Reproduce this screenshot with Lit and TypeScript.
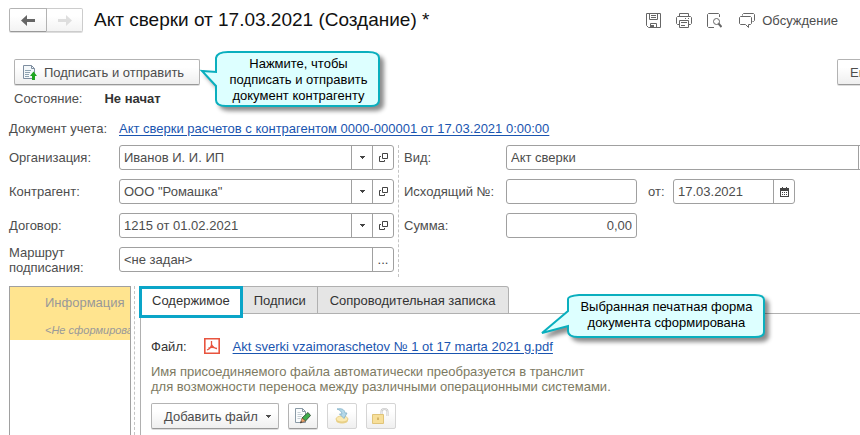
import { LitElement, html, svg, css } from "lit";
import { customElement, property } from "lit/decorators.js";

const shared = css`
  * { box-sizing: border-box; }
  button, input {
    font: inherit;
    color: inherit;
    margin: 0;
  }
  svg { display: block; flex: none; }
`;

const caret = svg`<path d="M0 0h5v1H4v1H3v1H2V2H1V1H0z" fill="currentColor"/>`;
const caretIcon = html`<svg width="5" height="3" viewBox="0 0 5 3" aria-hidden="true">${caret}</svg>`;

const openIcon = html`<svg width="9" height="9" viewBox="0 0 9 9" fill="none" stroke="#444" aria-hidden="true">
  <path d="M3.5.5h5v5h-5z"/><path d="M2 3.5H.5v5h5V7"/>
</svg>`;

const calendarIcon = html`<svg width="9" height="10" viewBox="0 0 9 10" aria-hidden="true">
  <path d="M0 1h9v9H0z" fill="#444"/><path d="M1 4h7v5H1z" fill="#fff"/>
  <path d="M2 0h1v2H2zM6 0h1v2H6z" fill="#444"/>
  <path d="M2 5h1v1H2zM4 5h1v1H4zM6 5h1v1H6zM2 7h1v1H2zM4 7h1v1H4zM6 7h1v1H6z" fill="#444"/>
</svg>`;

const saveIcon = html`<svg width="15" height="15" viewBox="0 0 15 15" fill="none" stroke="#666" aria-hidden="true">
  <path d="M.5.5h14v14h-12l-2-2z"/><path d="M3.500.5v6h8v-6M5 2.500h5M5 4.500h5M4.500 14.500v-4h6v4"/>
  <path d="M5 12h3v2H5z" fill="#666" stroke="none"/>
</svg>`;

const printIcon = html`<svg width="16" height="15" viewBox="0 0 16 15" fill="none" stroke="#666" aria-hidden="true">
  <path d="M3.500 3.500v-3h9v3M3.500 11.500h-2l-1-1v-6l1-1h13l1 1v6l-1 1h-2"/>
  <path d="M3.500 7.500h9v7h-9zM5 9.500h6M5 12.500h4M9 5.500h1M12 5.500h1"/>
</svg>`;

const previewIcon = html`<svg width="15" height="15" viewBox="0 0 15 15" fill="none" stroke="#666" aria-hidden="true">
  <path d="M12.500 4V1.500l-1-1h-10l-1 1v12l1 1H7"/><circle cx="9.500" cy="8.500" r="3"/>
  <path d="M11.500 10.500l3 3.500" stroke-width="2"/>
</svg>`;

const chatIcon = html`<svg width="16" height="15" viewBox="0 0 16 15" fill="none" stroke="#666" aria-hidden="true">
  <path d="M3.500 2.500v-1l1-1h10l1 1v6l-1 1h-1"/>
  <path d="M1.500 3.500h10l1 1v6l-1 1H9.500v3l-3-3h-5l-1-1v-6z"/>
</svg>`;

const signSendIcon = html`<svg width="14" height="15" viewBox="0 0 14 15" fill="none" aria-hidden="true">
  <path d="M.5.5h8l3 3v10H.5z" fill="#f4f8fa" stroke="#7e8ea0"/><path d="M8.500.5v3h3" stroke="#7e8ea0"/>
  <path d="M2 5.500h6M2 7.500h5M2 9.500h4M2 11.500h4" stroke="#8fa3b1"/>
  <path d="M10.500 6.500l3.500 4.500h-2v4H9v-4H7z" fill="#1fa51f"/>
</svg>`;

const pdfIcon = html`<svg width="16" height="16" viewBox="0 0 16 16" fill="none" stroke="#e8543f" aria-hidden="true">
  <path d="M.8.8h14.400v14.400H.8z" stroke-width="1.600"/>
  <path d="M7.500 3v3.500c0 2-2 4.500-4.500 5.500M7.500 6.500c.8 2 2.500 3.500 5.500 4M4.500 10.200c2.500-1.200 5-1.200 8 .5" stroke-width="1.300"/>
</svg>`;

const editIcon = html`<svg width="16" height="16" viewBox="0 0 16 16" fill="none" aria-hidden="true">
  <path d="M.5.5h7l3 3v11H.5z" fill="#fafcfd" stroke="#8a9aa6"/><path d="M7.500.5v3h3" stroke="#8a9aa6"/>
  <path d="M2.500 4.500h3M2.500 6.500h5M2.500 8.500h4M2.500 10.500h3" stroke="#c5ced4"/>
  <path d="M13 4.500l2.500 3-5 5.500-3.500-3z" fill="#3fae4c" stroke="#3c5c40"/>
  <path d="M7 10l3.500 3-5 2z" fill="#f0a468" stroke="#6a4a33" stroke-width=".6"/>
  <path d="M6 13l1.200 1.200-2.200 1z" fill="#333"/>
</svg>`;

const stampIcon = html`<svg width="14" height="16" viewBox="0 0 14 16" aria-hidden="true">
  <path d="M1 11v1.500c0 1.700 2.700 3 6 3s6-1.300 6-3V11z" fill="#ead38e"/>
  <ellipse cx="7" cy="11" rx="6" ry="3" fill="#fbeab2" stroke="#e3c878" stroke-width=".8"/>
  <path d="M2 1c4-.8 7.500 0 8 4h2L9 10.500 4.500 6H7C6.500 3.500 5 2 2 1z" fill="#b4d8e8" stroke="#7fb0c8" stroke-width=".8"/>
</svg>`;

const lockIcon = html`<svg width="17" height="16" viewBox="0 0 17 16" fill="none" aria-hidden="true">
  <path d="M9.500 7V3.500c0-1.500 1-2.500 3-2.500s3 1 3 2.500V8" stroke="#c4c4c4" stroke-width="2"/>
  <path d="M9.500 7V3.500c0-1.500 1-2.500 3-2.500s3 1 3 2.500V8" stroke="#f2f2f2" stroke-width=".8"/>
  <path d="M.5 6.500h11v9H.5z" fill="#f7df9a" stroke="#e0c479"/><path d="M6 9.500v2.500" stroke="#cba85a" stroke-width="1.500"/>
</svg>`;

const backIcon = html`<svg width="14" height="11" viewBox="0 0 14 11" aria-hidden="true">
  <path d="M6 0v4h8v3H6v4L0 5.500z" fill="#666"/>
</svg>`;
const forwardIcon = html`<svg width="14" height="11" viewBox="0 0 14 11" aria-hidden="true">
  <path d="M8 0v4H0v3h8v4l6-5.500z" fill="#dedede"/>
</svg>`;

@customElement("ref-field")
class RefField extends LitElement {
  @property() label = "";
  @property() value = "";
  @property() kind = "ref";

  static styles = [shared, css`
    :host { display: flex; align-items: center; height: 25px; }
    label { flex: none; width: var(--label-width, 110px); padding-right: 4px; line-height: 15px; }
    .box {
      flex: 1 1 0;
      min-width: 0;
      display: flex;
      height: 25px;
      border: 1px solid #a0a0a0;
      border-radius: 3px;
      background: #fff;
      overflow: hidden;
    }
    input { flex: 1 1 0; min-width: 0; border: 0; padding: 0 4px; background: none; outline: 0; }
    .number { text-align: right; }
    .box button {
      flex: none;
      width: 21px;
      padding: 0;
      border: 0;
      border-left: 1px solid #a0a0a0;
      background: none;
      display: flex;
      align-items: center;
      justify-content: center;
      color: #444;
    }
  `];

  render() {
    const k = this.kind;
    return html`
      <label for="f">${this.label}</label>
      <div class="box">
        <input id="f" class=${k === "number" ? "number" : ""} .value=${this.value}>
        ${k === "ref" ? html`<button aria-label="Выбрать">${caretIcon}</button><button aria-label="Открыть">${openIcon}</button>` : ""}
        ${k === "choice" ? html`<button aria-label="Выбрать">${caretIcon}</button>` : ""}
        ${k === "dots" ? html`<button aria-label="Выбрать маршрут">...</button>` : ""}
        ${k === "date" ? html`<button aria-label="Календарь">${calendarIcon}</button>` : ""}
      </div>
    `;
  }
}

@customElement("app-root")
class AppRoot extends LitElement {
  static styles = [shared, css`
    :host {
      display: flex;
      flex-direction: column;
      min-height: 100vh;
      overflow: hidden;
      background: #fff;
      color: #4d4d4d;
      font-family: "Liberation Sans", Arial, sans-serif;
      font-size: 13px;
      line-height: 15px;
    }
    .header { display: flex; align-items: center; height: 40px; padding: 0 22px 0 9px; }
    .nav { display: flex; height: 24px; }
    .nav button {
      width: 38px;
      padding: 0;
      border: 1px solid #b3b3b3;
      border-bottom-color: #999;
      border-radius: 2px 0 0 2px;
      box-shadow: 0 1px 0 #ddd;
      background: linear-gradient(#fff 30%, #f3f3f3);
      display: flex;
      align-items: center;
      justify-content: center;
    }
    .nav button:disabled { width: 36px; border-color: #ccc; border-left: 0; border-radius: 0 2px 2px 0; }
    h1 { flex: 1; margin: 0 0 0 11px; font-size: 19px; line-height: 24px; font-weight: 400; color: #111; white-space: nowrap; }
    .tools { display: flex; gap: 15px; align-items: center; }
    .tools button {
      display: flex;
      align-items: center;
      gap: 7px;
      border: 0;
      padding: 0;
      background: none;
      white-space: nowrap;
    }
    .tools button:last-child { margin-left: 2px; }
    .commands { display: flex; justify-content: space-between; margin-top: 19px; padding-left: 14px; }
    .anchor { position: relative; display: flex; }
    .btn {
      display: flex;
      align-items: center;
      justify-content: center;
      height: 26px;
      padding: 0 12px;
      border: 1px solid #b3b3b3;
      border-bottom-color: #999;
      border-radius: 2px;
      background: linear-gradient(#fff 30%, #efefef);
      box-shadow: 0 1px 0 #ddd;
      white-space: nowrap;
    }
    .btn:disabled { border-color: #d5d5d5; box-shadow: none; }
    .sign { padding: 0 15px 0 8px; gap: 7px; }
    .more { width: 63px; justify-content: flex-start; margin-right: -40px; }
    .state { display: flex; gap: 22px; padding: 6px 14px 0; }
    .state b { color: #333; }
    .doc { display: flex; padding: 15px 9px 0; white-space: nowrap; }
    .doc span { flex: none; width: 110px; }
    a { color: #1a55b0; text-decoration: underline; text-underline-offset: 2px; }
    .form { display: flex; margin-top: 9px; padding-left: 9px; }
    .left { flex: 0 1 390px; padding: 0 4px 5px 0; border-right: 1px dashed #c4c4c4; display: flex; flex-direction: column; gap: 9px; }
    .right { flex: 1; padding-left: 5px; margin-right: -20px; display: flex; flex-direction: column; gap: 9px; --label-width: 102px; }
    .pair { display: flex; gap: 11px; }
    .short { width: 233px; }
    .date { width: 147px; --label-width: 25px; }
    .body { flex: 1; display: flex; margin-top: 9px; padding-left: 9px; }
    .list { width: 122px; border: 1px solid #a0a0a0; border-bottom: 0; overflow: hidden; }
    .item { height: 53px; padding: 8px 0 0 35px; background: #ffe48f; color: #999; white-space: nowrap; }
    .item i { display: block; margin-top: 13px; font-size: 11px; }
    .split { width: 4px; border-right: 1px dashed #c4c4c4; margin-right: 4px; }
    .pane { flex: 1; min-width: 0; display: flex; flex-direction: column; }
    .tabs { display: flex; height: 28px; border-bottom: 1px solid #b0b0b0; }
    .tab {
      height: 28px;
      padding: 0 11px;
      border: 1px solid #b0b0b0;
      border-left-width: 0;
      background: #e5e5e5;
      color: #333;
      white-space: nowrap;
    }
    .tab:last-child { padding: 0 12px; border-radius: 0 3px 0 0; }
    .tab.active { height: 32px; padding: 0 10px 4px; border: 3px solid #0aa5c8; background: #fff; z-index: 1; }
    .content { flex: 1; border-left: 1px solid #b0b0b0; margin-left: 1px; padding: 23px 0 6px 10px; }
    .file { display: flex; align-items: center; height: 18px; color: #333; white-space: nowrap; }
    .pdf { margin: 0 13px 0 17px; }
    .hint { margin: 9px 0 0; color: #7d7a62; }
    .actions { display: flex; gap: 9px; margin-top: 9px; }
    .add { gap: 8px; padding: 0 7px 0 12px; }
    .icon { width: 30px; padding: 0; }
    .callout { position: absolute; z-index: 2; color: #000; font-size: 13px; line-height: 16px; text-align: center; white-space: nowrap; }
    .callout svg { position: absolute; left: 0; top: 0; overflow: visible; filter: drop-shadow(4px 4px 2px rgba(0, 0, 0, 0.45)); }
    .callout p { position: relative; margin: 0; }
    .c1 { left: 187px; top: -8px; width: 180px; padding: 5px 0 0 15px; }
    .c2 { right: -213px; top: -46px; width: 225px; padding: 6px 0 0 26px; }
  `];

  render() {
    return html`
      <header class="header">
        <div class="nav">
          <button aria-label="Назад">${backIcon}</button>
          <button aria-label="Вперед" disabled>${forwardIcon}</button>
        </div>
        <h1>Акт сверки от 17.03.2021 (Создание) *</h1>
        <div class="tools">
          <button aria-label="Сохранить">${saveIcon}</button>
          <button aria-label="Печать">${printIcon}</button>
          <button aria-label="Просмотр">${previewIcon}</button>
          <button>${chatIcon}Обсуждение</button>
        </div>
      </header>

      <div class="commands">
        <div class="anchor">
          <button class="btn sign">${signSendIcon}Подписать и отправить</button>
          <div class="callout c1" role="note">
            <svg width="180" height="58" viewBox="0 0 180 58" aria-hidden="true">
              <path d="M15 7Q16 1 27 1H167Q178 1 178 7V49Q178 55 170 55H25Q15 55 15 49V35L1 20L15 21Z" fill="#dff" stroke="#0aafbe" stroke-width="2"/>
            </svg>
            <p>Нажмите, чтобы<br>подписать и отправить<br>документ контрагенту</p>
          </div>
        </div>
        <button class="btn more">Еще</button>
      </div>
      <div class="state"><span>Состояние:</span><b>Не начат</b></div>
      <div class="doc">
        <span>Документ учета:</span>
        <a href="#">Акт сверки расчетов с контрагентом 0000-000001 от 17.03.2021 0:00:00</a>
      </div>

      <div class="form">
        <div class="left">
          <ref-field label="Организация:" value="Иванов И. И. ИП"></ref-field>
          <ref-field label="Контрагент:" value='ООО "Ромашка"'></ref-field>
          <ref-field label="Договор:" value="1215 от 01.02.2021"></ref-field>
          <ref-field label="Маршрут подписания:" value="<не задан>" kind="dots"></ref-field>
        </div>
        <div class="right">
          <ref-field label="Вид:" value="Акт сверки" kind="choice"></ref-field>
          <div class="pair">
            <ref-field class="short" label="Исходящий №:" kind="text"></ref-field>
            <ref-field class="date" label="от:" value="17.03.2021" kind="date"></ref-field>
          </div>
          <ref-field class="short" label="Сумма:" value="0,00" kind="number"></ref-field>
        </div>
      </div>

      <div class="body">
        <div class="list"><div class="item">Информация<i>&lt;Не сформирован&gt;</i></div></div>
        <div class="split"></div>
        <div class="pane">
          <div class="tabs" role="tablist">
            <button class="tab active" role="tab" aria-selected="true">Содержимое</button>
            <button class="tab" role="tab">Подписи</button>
            <button class="tab" role="tab">Сопроводительная записка</button>
          </div>
          <div class="content">
            <div class="file">
              <span>Файл:</span><span class="pdf">${pdfIcon}</span>
              <div class="anchor">
                <a href="#">Akt sverki vzaimoraschetov № 1 ot 17 marta 2021 g.pdf</a>
                <div class="callout c2" role="note">
                  <svg width="225" height="46" viewBox="0 0 225 46" aria-hidden="true">
                    <path d="M27 6Q27 3 38 2H214Q223 2 223 7V39Q223 44 214 44H37Q27 44 27 38V33L1 40L27 18Z" fill="#dff" stroke="#0aafbe" stroke-width="2"/>
                  </svg>
                  <p>Выбранная печатная форма<br>документа сформирована</p>
                </div>
              </div>
            </div>
            <p class="hint">Имя присоединяемого файла автоматически преобразуется в транслит<br>для возможности переноса между различными операционными системами.</p>
            <div class="actions">
              <button class="btn add">Добавить файл${caretIcon}</button>
              <button class="btn icon" aria-label="Изменить">${editIcon}</button>
              <button class="btn icon" aria-label="Загрузить" disabled>${stampIcon}</button>
              <button class="btn icon" aria-label="Разблокировать" disabled>${lockIcon}</button>
            </div>
          </div>
        </div>
      </div>
    `;
  }
}
